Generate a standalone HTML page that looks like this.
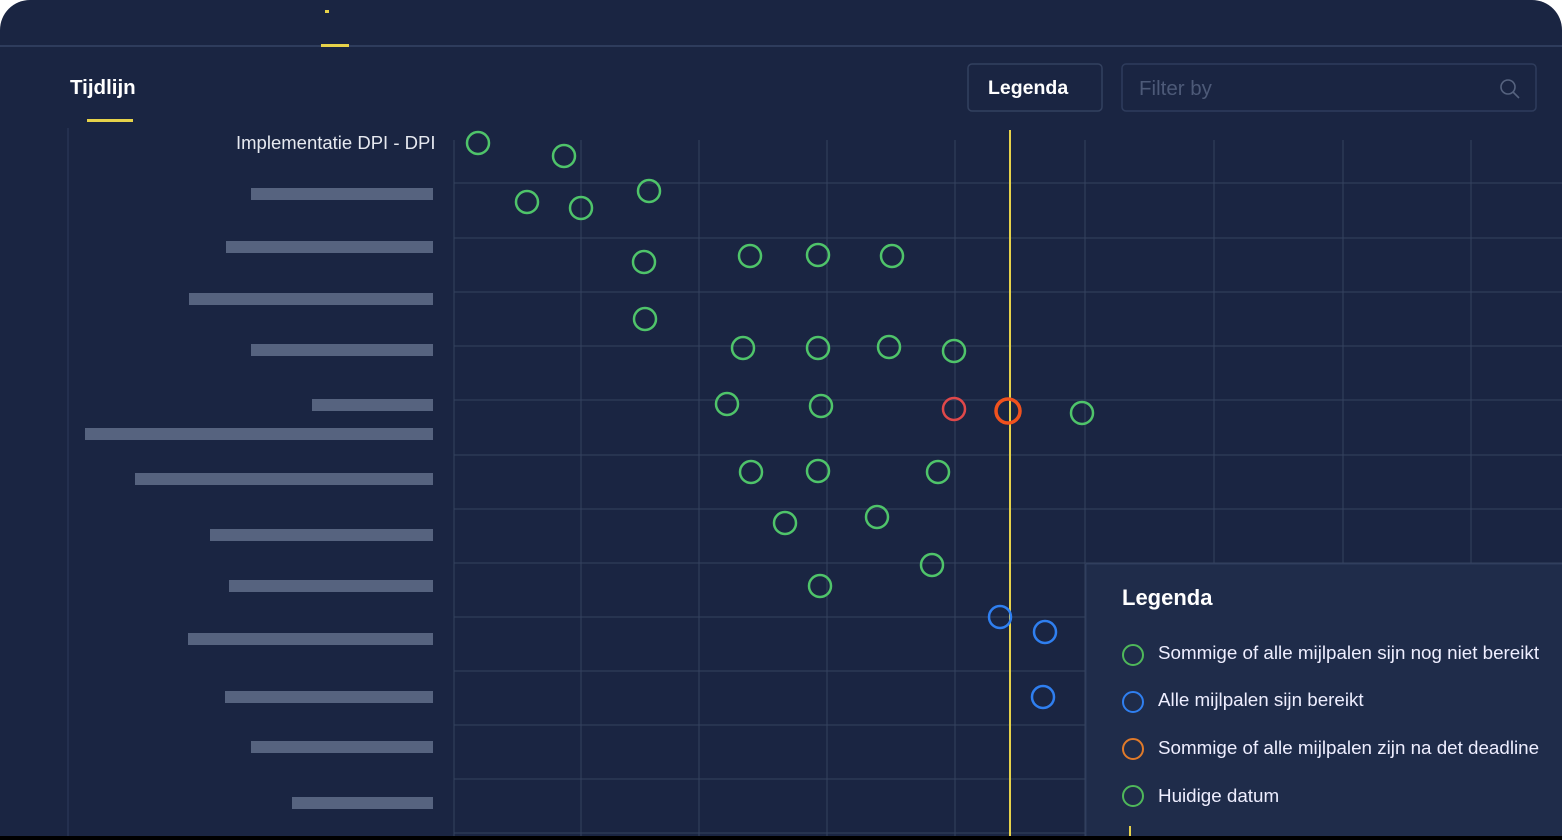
<!DOCTYPE html><html><head><style>
html,body{margin:0;padding:0;background:#fff;}
body{width:1562px;height:840px;overflow:hidden;font-family:"Liberation Sans",sans-serif;}
.f{position:absolute;left:0;top:0;width:1562px;height:836px;background:#1a2542;border-radius:30px 30px 0 0;overflow:hidden;}
.blk{position:absolute;left:0;top:836px;width:1562px;height:4px;background:#000;}
.t{position:absolute;color:#fff;white-space:nowrap;}
</style></head><body>
<div class="f">
<svg width="1562" height="836" style="position:absolute;left:0;top:0">
<line x1="0" y1="46" x2="1562" y2="46" stroke="#2e3c5c" stroke-width="2"/>
<rect x="321" y="44" width="28" height="3" fill="#e6d24a"/>
<rect x="325" y="10" width="4" height="3" fill="#e6d24a"/>
<rect x="87" y="119" width="46" height="3" fill="#e6d24a"/>
<line x1="68" y1="128" x2="68" y2="836" stroke="#2f3c5c"/>
<g stroke="#34425f" stroke-width="1">
<line x1="454" y1="140" x2="454" y2="836"/><line x1="581" y1="140" x2="581" y2="836"/><line x1="699" y1="140" x2="699" y2="836"/><line x1="827" y1="140" x2="827" y2="836"/><line x1="955" y1="140" x2="955" y2="836"/><line x1="1085" y1="140" x2="1085" y2="836"/><line x1="1214" y1="140" x2="1214" y2="836"/><line x1="1343" y1="140" x2="1343" y2="836"/><line x1="1471" y1="140" x2="1471" y2="836"/>
<line x1="454" y1="183" x2="1562" y2="183"/><line x1="454" y1="238" x2="1562" y2="238"/><line x1="454" y1="292" x2="1562" y2="292"/><line x1="454" y1="346" x2="1562" y2="346"/><line x1="454" y1="400" x2="1562" y2="400"/><line x1="454" y1="455" x2="1562" y2="455"/><line x1="454" y1="509" x2="1562" y2="509"/><line x1="454" y1="563" x2="1562" y2="563"/><line x1="454" y1="617" x2="1562" y2="617"/><line x1="454" y1="671" x2="1562" y2="671"/><line x1="454" y1="725" x2="1562" y2="725"/><line x1="454" y1="779" x2="1562" y2="779"/><line x1="454" y1="833" x2="1562" y2="833"/>
</g>
<g fill="#56637f">
<rect x="251" y="188" width="182" height="12"/><rect x="226" y="241" width="207" height="12"/><rect x="189" y="293" width="244" height="12"/><rect x="251" y="344" width="182" height="12"/><rect x="312" y="399" width="121" height="12"/><rect x="85" y="428" width="348" height="12"/><rect x="135" y="473" width="298" height="12"/><rect x="210" y="529" width="223" height="12"/><rect x="229" y="580" width="204" height="12"/><rect x="188" y="633" width="245" height="12"/><rect x="225" y="691" width="208" height="12"/><rect x="251" y="741" width="182" height="12"/><rect x="292" y="797" width="141" height="12"/>
</g>
<line x1="1010" y1="130" x2="1010" y2="836" stroke="#e6d24a" stroke-width="2"/>
<g fill="none" stroke="#4fc46a" stroke-width="2.5">
<circle cx="478" cy="143" r="11"/><circle cx="564" cy="156" r="11"/><circle cx="527" cy="202" r="11"/><circle cx="581" cy="208" r="11"/><circle cx="649" cy="191" r="11"/>
<circle cx="644" cy="262" r="11"/><circle cx="750" cy="256" r="11"/><circle cx="818" cy="255" r="11"/><circle cx="892" cy="256" r="11"/>
<circle cx="645" cy="319" r="11"/><circle cx="743" cy="348" r="11"/><circle cx="818" cy="348" r="11"/><circle cx="889" cy="347" r="11"/><circle cx="954" cy="351" r="11"/>
<circle cx="727" cy="404" r="11"/><circle cx="821" cy="406" r="11"/><circle cx="1082" cy="413" r="11"/>
<circle cx="751" cy="472" r="11"/><circle cx="818" cy="471" r="11"/><circle cx="938" cy="472" r="11"/>
<circle cx="785" cy="523" r="11"/><circle cx="877" cy="517" r="11"/><circle cx="932" cy="565" r="11"/><circle cx="820" cy="586" r="11"/>
</g>
<circle cx="954" cy="409" r="11" fill="none" stroke="#e0484a" stroke-width="2.5"/>
<circle cx="1008" cy="411" r="12" fill="none" stroke="#f0521e" stroke-width="3.5"/>
<g fill="none" stroke="#2f7ff0" stroke-width="2.5">
<circle cx="1000" cy="617" r="11"/><circle cx="1045" cy="632" r="11"/><circle cx="1043" cy="697" r="11"/>
</g>
<rect x="1086" y="564" width="476" height="272" fill="#1f2c4a"/>
<line x1="1086" y1="564" x2="1562" y2="564" stroke="#2e3c5c"/>
<line x1="1086" y1="564" x2="1086" y2="836" stroke="#2e3c5c"/>
<g fill="none" stroke-width="2">
<circle cx="1133" cy="655" r="10" stroke="#4fb85a"/><circle cx="1133" cy="702" r="10" stroke="#2f7ff0"/><circle cx="1133" cy="749" r="10" stroke="#e07a2a"/><circle cx="1133" cy="796" r="10" stroke="#4fb85a"/>
</g>
<rect x="1129" y="826" width="2" height="10" fill="#e6d24a"/>
<rect x="968" y="64" width="134" height="47" rx="4" fill="none" stroke="#33415f" stroke-width="1.5"/>
<rect x="1122" y="64" width="414" height="47" rx="4" fill="none" stroke="#2e3c5c" stroke-width="1.5"/>
<circle cx="1508" cy="87" r="7" fill="none" stroke="#56637f" stroke-width="1.6"/>
<line x1="1513" y1="92" x2="1519" y2="98" stroke="#56637f" stroke-width="1.6"/>
</svg>
<div class="t" style="left:70px;top:76px;font-size:20.5px;font-weight:bold">Tijdlijn</div>
<div class="t" style="left:236px;top:132px;font-size:18.5px;color:#e6e9f0">Implementatie DPI - DPI</div>
<div class="t" style="left:988px;top:77px;font-size:19.5px;font-weight:bold">Legenda</div>
<div class="t" style="left:1139px;top:77px;font-size:20.5px;color:#4d5a78">Filter by</div>
<div class="t" style="left:1122px;top:585px;font-size:22px;font-weight:bold">Legenda</div>
<div class="t" style="left:1158px;top:642px;font-size:18.8px;color:#eef">Sommige of alle mijlpalen sijn nog niet bereikt</div>
<div class="t" style="left:1158px;top:689px;font-size:18.8px;color:#eef">Alle mijlpalen sijn bereikt</div>
<div class="t" style="left:1158px;top:737px;font-size:18.8px;color:#eef">Sommige of alle mijlpalen zijn na det deadline</div>
<div class="t" style="left:1158px;top:785px;font-size:18.8px;color:#eef">Huidige datum</div>
</div>
<div class="blk"></div>
</body></html>
